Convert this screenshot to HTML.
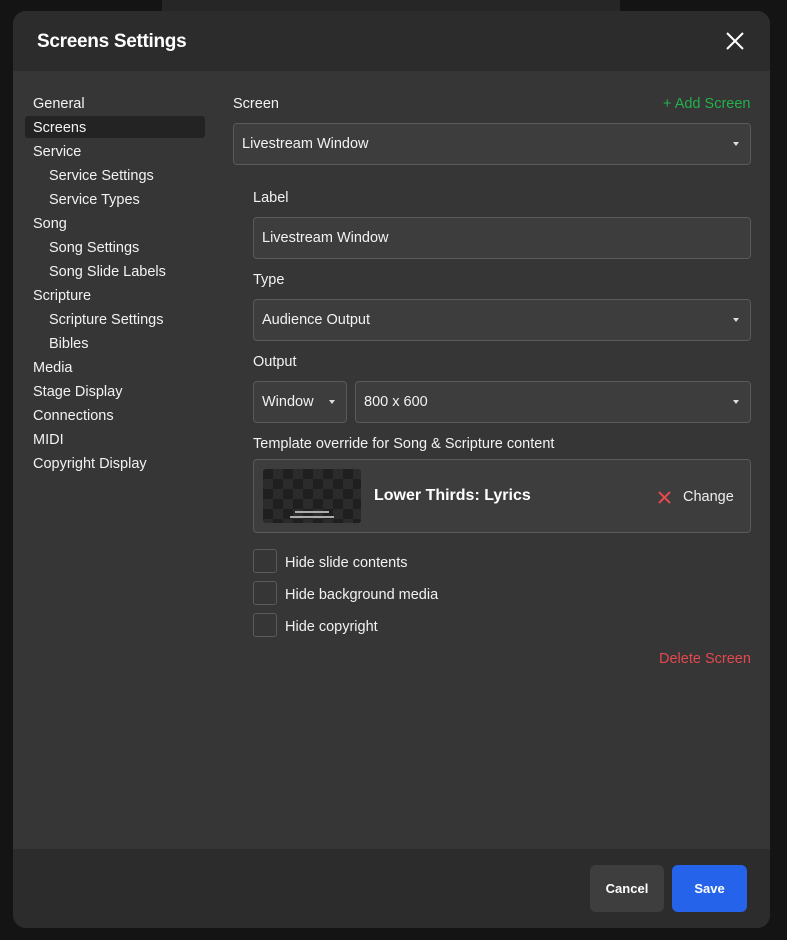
<!DOCTYPE html>
<html><head><style>
*{box-sizing:border-box;margin:0;padding:0}
body{width:787px;height:940px;background:#141414;font-family:"Liberation Sans",sans-serif;color:#eee;position:relative;overflow:hidden;font-size:14.5px}
.dlg{position:absolute;left:13px;top:11px;width:757px;height:917px;background:#363636;border-radius:13px;overflow:hidden}
.hdr{position:absolute;left:0;top:0;width:100%;height:60px;background:#2c2c2c}
.hdr h1{position:absolute;left:24px;top:20px;font-size:19px;font-weight:bold;color:#fff;letter-spacing:-0.3px}
.ftr{position:absolute;left:0;top:838px;width:100%;height:79px;background:#2c2c2c}
.abs{position:absolute;white-space:nowrap}
.nav{position:absolute;left:20px;font-size:14.5px;color:#f2f2f2;margin-top:2px}
.sel{position:absolute;left:12px;top:105px;width:180px;height:22px;background:#232323;border-radius:3px}
.box{position:absolute;background:#3d3d3d;border:1px solid #5a5a5a;border-radius:4px;padding-left:8px;display:flex;align-items:center;color:#f2f2f2}
.caret{position:absolute;right:11px;top:50%;margin-top:-2px;width:0;height:0;border-left:3.5px solid transparent;border-right:3.5px solid transparent;border-top:4px solid #ddd}
.lbl{position:absolute;color:#f2f2f2;margin-top:2px}
.cb{position:absolute;left:240px;width:24px;height:24px;border:1px solid #5a5a5a;border-radius:3px;background:#363636}
.btn{position:absolute;top:854px;height:47px;border-radius:6px;display:flex;align-items:center;justify-content:center;font-weight:bold;font-size:13px;color:#fff}
</style></head><body>
<div style="position:absolute;left:162px;top:0;width:458px;height:11px;background:#262626"></div>
<div class="dlg">
<div class="hdr"><h1>Screens Settings</h1>
<svg class="abs" style="left:713px;top:21px" width="18" height="18" viewBox="0 0 18 18"><path d="M1 1L17 17M17 1L1 17" stroke="#fff" stroke-width="2"/></svg></div>
<div class="sel"></div>
<div class="nav" style="top:83px">General</div>
<div class="nav" style="top:107px">Screens</div>
<div class="nav" style="top:131px">Service</div>
<div class="nav" style="top:155px;left:36px">Service Settings</div>
<div class="nav" style="top:179px;left:36px">Service Types</div>
<div class="nav" style="top:203px">Song</div>
<div class="nav" style="top:227px;left:36px">Song Settings</div>
<div class="nav" style="top:251px;left:36px">Song Slide Labels</div>
<div class="nav" style="top:275px">Scripture</div>
<div class="nav" style="top:299px;left:36px">Scripture Settings</div>
<div class="nav" style="top:323px;left:36px">Bibles</div>
<div class="nav" style="top:347px">Media</div>
<div class="nav" style="top:371px">Stage Display</div>
<div class="nav" style="top:395px">Connections</div>
<div class="nav" style="top:419px">MIDI</div>
<div class="nav" style="top:443px">Copyright Display</div>

<div class="lbl" style="left:220px;top:83px">Screen</div>
<div class="lbl" style="left:650px;top:83px;color:#22b14c">+ Add Screen</div>
<div class="box" style="left:220px;top:112px;width:518px;height:42px">Livestream Window<span class="caret"></span></div>
<div class="lbl" style="left:240px;top:177px">Label</div>
<div class="box" style="left:240px;top:206px;width:498px;height:42px">Livestream Window</div>
<div class="lbl" style="left:240px;top:259px">Type</div>
<div class="box" style="left:240px;top:288px;width:498px;height:42px">Audience Output<span class="caret"></span></div>
<div class="lbl" style="left:240px;top:341px">Output</div>
<div class="box" style="left:240px;top:370px;width:94px;height:42px">Window<span class="caret"></span></div>
<div class="box" style="left:342px;top:370px;width:396px;height:42px">800 x 600<span class="caret"></span></div>
<div class="lbl" style="left:240px;top:423px">Template override for Song &amp; Scripture content</div>
<div class="box" style="left:240px;top:448px;width:498px;height:74px;padding:0">
<div class="abs" style="left:9px;top:9px;width:98px;height:54px;border-radius:3px;background-color:#1f1f1f;background-image:linear-gradient(45deg,#2b2b2b 25%,transparent 25%,transparent 75%,#2b2b2b 75%),linear-gradient(45deg,#2b2b2b 25%,transparent 25%,transparent 75%,#2b2b2b 75%);background-size:20px 20px;background-position:0 0,10px 10px">
<div class="abs" style="left:32px;top:42px;width:34px;height:2px;background:#aaa"></div>
<div class="abs" style="left:27px;top:47px;width:44px;height:2px;background:#aaa"></div></div>
<div class="abs" style="left:120px;top:27px;font-size:16px;font-weight:bold;color:#fff">Lower Thirds: Lyrics</div>
<svg class="abs" style="left:404px;top:31px" width="13" height="13" viewBox="0 0 13 13"><path d="M1 1L12 12M12 1L1 12" stroke="#e5484d" stroke-width="2"/></svg>
<div class="abs" style="left:429px;top:29px;color:#eee">Change</div></div>
<div class="cb" style="top:538px"></div><div class="lbl" style="left:272px;top:542px">Hide slide contents</div>
<div class="cb" style="top:570px"></div><div class="lbl" style="left:272px;top:574px">Hide background media</div>
<div class="cb" style="top:602px"></div><div class="lbl" style="left:272px;top:606px">Hide copyright</div>
<div class="lbl" style="left:646px;top:638px;color:#e5484d">Delete Screen</div>
<div class="ftr"></div>
<div class="btn" style="left:577px;width:74px;background:#3e3e3e">Cancel</div>
<div class="btn" style="left:659px;width:75px;background:#2563eb">Save</div>
</div>
</body></html>
